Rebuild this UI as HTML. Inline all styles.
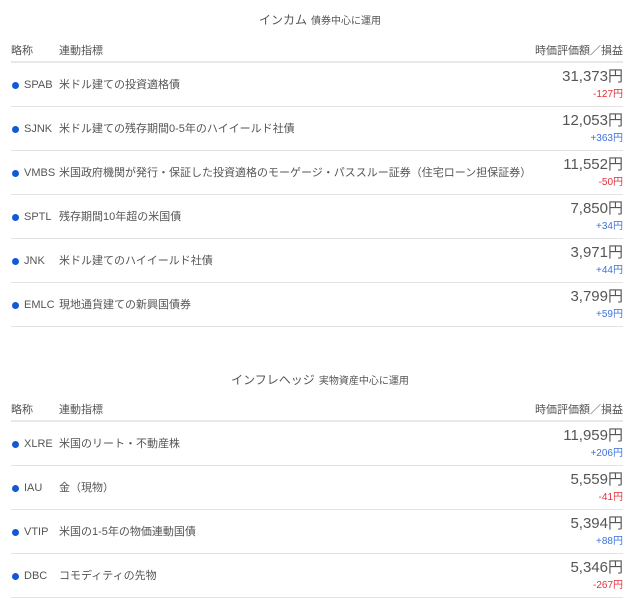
<!DOCTYPE html><html><head><meta charset="utf-8"><style>
body{margin:0;width:640px;height:610px;background:#fff;font-family:"Liberation Sans","Noto Sans CJK JP",sans-serif;color:#555;position:relative;overflow:hidden}
.t{position:absolute;left:0;width:640px;text-align:center;font-size:12px;line-height:16px;color:#555}
.t small{font-size:10px;margin-left:4px}
.h{position:absolute;left:11px;width:612px;height:20px;border-bottom:2px solid #e8e8e8;font-size:11px;line-height:14px}
.h span{position:absolute;top:3px}
.r{position:absolute;left:11px;width:612px;height:43px;border-bottom:1px solid #e3e3e3;font-size:11px;line-height:14px}
.d{position:absolute;left:1px;top:19px;width:7px;height:7px;border-radius:50%;background:#1558d6}
.c{position:absolute;left:13px;top:15px}
.n{position:absolute;left:48px;top:15px}
.v{position:absolute;right:0;top:6px;font-size:15px;line-height:16px;color:#555}
.p{position:absolute;right:0;top:26px;font-size:10px;line-height:12px}
.m{color:#e0303a}.pl{color:#3b73df}
</style></head><body>
<div class="t" style="top:12px">インカム<small>債券中心に運用</small></div>
<div class="h" style="top:41px"><span style="left:0">略称</span><span style="left:48px">連動指標</span><span style="right:0">時価評価額／損益</span></div>
<div class="r" style="top:63px"><i class="d"></i><span class="c">SPAB</span><span class="n">米ドル建ての投資適格債</span><span class="v">31,373円</span><span class="p m">-127円</span></div>
<div class="r" style="top:107px"><i class="d"></i><span class="c">SJNK</span><span class="n">米ドル建ての残存期間0-5年のハイイールド社債</span><span class="v">12,053円</span><span class="p pl">+363円</span></div>
<div class="r" style="top:151px"><i class="d"></i><span class="c">VMBS</span><span class="n">米国政府機関が発行・保証した投資適格のモーゲージ・パススルー証券（住宅ローン担保証券）</span><span class="v">11,552円</span><span class="p m">-50円</span></div>
<div class="r" style="top:195px"><i class="d"></i><span class="c">SPTL</span><span class="n">残存期間10年超の米国債</span><span class="v">7,850円</span><span class="p pl">+34円</span></div>
<div class="r" style="top:239px"><i class="d"></i><span class="c">JNK</span><span class="n">米ドル建てのハイイールド社債</span><span class="v">3,971円</span><span class="p pl">+44円</span></div>
<div class="r" style="top:283px"><i class="d"></i><span class="c">EMLC</span><span class="n">現地通貨建ての新興国債券</span><span class="v">3,799円</span><span class="p pl">+59円</span></div>
<div class="t" style="top:372px">インフレヘッジ<small>実物資産中心に運用</small></div>
<div class="h" style="top:400px"><span style="left:0">略称</span><span style="left:48px">連動指標</span><span style="right:0">時価評価額／損益</span></div>
<div class="r" style="top:422px"><i class="d"></i><span class="c">XLRE</span><span class="n">米国のリート・不動産株</span><span class="v">11,959円</span><span class="p pl">+206円</span></div>
<div class="r" style="top:466px"><i class="d"></i><span class="c">IAU</span><span class="n">金（現物）</span><span class="v">5,559円</span><span class="p m">-41円</span></div>
<div class="r" style="top:510px"><i class="d"></i><span class="c">VTIP</span><span class="n">米国の1-5年の物価連動国債</span><span class="v">5,394円</span><span class="p pl">+88円</span></div>
<div class="r" style="top:554px"><i class="d"></i><span class="c">DBC</span><span class="n">コモディティの先物</span><span class="v">5,346円</span><span class="p m">-267円</span></div>
</body></html>
